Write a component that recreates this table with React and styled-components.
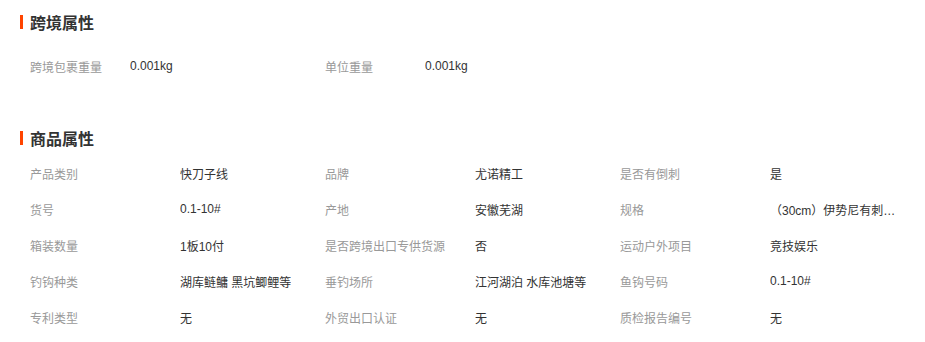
import React from "react";
import styled, { createGlobalStyle } from "styled-components";

const GlobalStyle = createGlobalStyle`
  html, body { margin: 0; padding: 0; background: #fff; }
  body {
    font-family: "Liberation Sans", "Noto Sans CJK SC", sans-serif;
    font-size: 12px;
    color: #333;
  }
`;

const Page = styled.div`
  width: 925px;
  padding-bottom: 7px;
`;

const Section = styled.section`
  padding-top: ${(p) => p.$top}px;
`;

const Title = styled.h3`
  margin: 0 0 ${(p) => p.$gap}px 0;
  display: flex;
  align-items: center;
  gap: 7px;
  padding-left: 20px;
  height: 16px;
  font-size: 16px;
  line-height: 16px;
  font-weight: bold;
  color: #333;
  font-family: "Noto Sans CJK SC", sans-serif;

  &::before {
    content: "";
    width: 3px;
    height: 14px;
    background: #ff4400;
  }
`;

const Grid = styled.div`
  display: grid;
  grid-template-columns: repeat(3, 295px);
  padding-left: 30px;
`;

const Item = styled.div`
  display: flex;
  align-items: center;
  height: 36px;
  min-width: 0;
`;

const Label = styled.span`
  flex: 0 0 ${(p) => p.$w}px;
  color: #999;
  white-space: nowrap;
`;

const Value = styled.span`
  max-width: 134px;
  color: #333;
  white-space: nowrap;
  overflow: hidden;
  text-overflow: ellipsis;
`;

const cross = [
  ["跨境包裹重量", "0.001kg"],
  ["单位重量", "0.001kg"],
];

const goods = [
  ["产品类别", "快刀子线"],
  ["品牌", "尤诺精工"],
  ["是否有倒刺", "是"],
  ["货号", "0.1-10#"],
  ["产地", "安徽芜湖"],
  ["规格", "（30cm）伊势尼有刺鱼钩"],
  ["箱装数量", "1板10付"],
  ["是否跨境出口专供货源", "否"],
  ["运动户外项目", "竞技娱乐"],
  ["钓钩种类", "湖库鲢鳙 黑坑鲫鲤等"],
  ["垂钓场所", "江河湖泊 水库池塘等"],
  ["鱼钩号码", "0.1-10#"],
  ["专利类型", "无"],
  ["外贸出口认证", "无"],
  ["质检报告编号", "无"],
];

const Attrs = ({ items, labelWidth }) => (
  <Grid>
    {items.map(([k, v]) => (
      <Item key={k}>
        <Label $w={labelWidth}>{k}</Label>
        <Value title={v}>{v}</Value>
      </Item>
    ))}
  </Grid>
);

export default function App() {
  return (
    <Page>
      <GlobalStyle />
      <Section $top={14}>
        <Title $gap={18}>跨境属性</Title>
        <Attrs items={cross} labelWidth={100} />
      </Section>
      <Section $top={46}>
        <Title $gap={9}>商品属性</Title>
        <Attrs items={goods} labelWidth={150} />
      </Section>
    </Page>
  );
}
